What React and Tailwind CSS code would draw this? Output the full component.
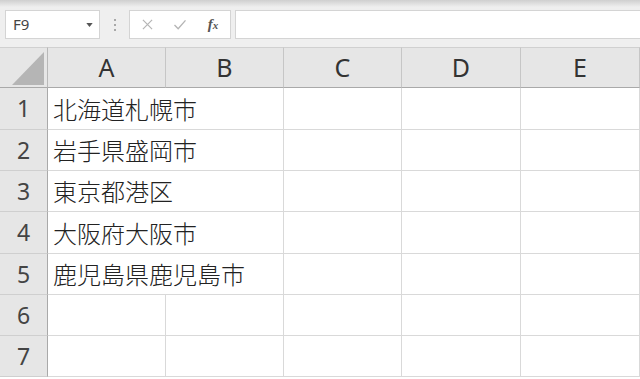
import React from "react";

const cols = ["A", "B", "C", "D", "E"];
const rowHeights = [42, 41, 41, 42, 41, 41, 41];
const data = ["北海道札幌市", "岩手県盛岡市", "東京都港区", "大阪府大阪市", "鹿児島県鹿児島市", "", ""];

const latin = { fontFamily: '"Noto Sans", "Open Sans", sans-serif' };
const cjk = { fontFamily: '"Noto Sans CJK JP", "Noto Sans", sans-serif' };

function FormulaBar() {
  return (
    <div className="h-[47px] bg-[#efefef] relative">
      <div className="absolute inset-x-0 top-0 h-[7px] bg-gradient-to-b from-[#cfcfcf] to-[#efefef]" />
      <div className="relative flex items-start pt-[10px]">
        {/* Name box */}
        <div className="ml-[5px] w-[95px] h-[29px] bg-white border border-[#d4d4d4] flex items-center justify-between pl-[7px] pr-[6px]">
          <span className="text-[15px] text-[#444] leading-none" style={latin}>F9</span>
          <svg viewBox="0 0 8 5" className="w-[7px] h-[4px] fill-[#555]">
            <path d="M0 0h8L4 5z" />
          </svg>
        </div>
        {/* dots */}
        <div className="w-[29px] h-[29px] flex flex-col items-center justify-center gap-[3px]">
          <span className="w-[2px] h-[2px] bg-[#a8a8a8]" />
          <span className="w-[2px] h-[2px] bg-[#a8a8a8]" />
          <span className="w-[2px] h-[2px] bg-[#a8a8a8]" />
        </div>
        {/* buttons */}
        <div className="w-[102px] h-[29px] bg-white border border-[#d4d4d4] flex items-center">
          <div className="w-[34px] flex justify-center">
            <svg viewBox="0 0 12 12" className="w-[11px] h-[11px] stroke-[#b5b5b5]" strokeWidth="1.3" fill="none">
              <path d="M1 1l10 10M11 1L1 11" />
            </svg>
          </div>
          <div className="w-[32px] flex justify-center">
            <svg viewBox="0 0 14 12" className="w-[14px] h-[11px] stroke-[#b5b5b5]" strokeWidth="1.5" fill="none">
              <path d="M1 6.5l4 4L13 1.5" />
            </svg>
          </div>
          <div className="w-[34px] flex justify-center">
            <span className="text-[15px] italic font-bold text-[#555] leading-none" style={{ fontFamily: '"Liberation Serif", serif' }}>
              f<span className="text-[11px]">x</span>
            </span>
          </div>
        </div>
        {/* formula input */}
        <div className="ml-[4px] flex-1 h-[29px] bg-white border border-[#d4d4d4] border-r-0" />
      </div>
    </div>
  );
}

export default function App() {
  return (
    <div className="w-[640px] h-[379px] overflow-hidden bg-white select-none">
      <FormulaBar />
      <div className="grid grid-cols-[48px_118px_118px_118px_119px_119px] bg-white">
        {/* header row */}
        <div className="h-[41px] bg-[#e6e6e6] border-t border-[#d0d0d0] border-b border-b-[#a9a9a9] border-r border-r-[#b8b8b8] flex items-end justify-end pr-[3px] pb-[2px]">
          <svg viewBox="0 0 32 33" className="w-[32px] h-[33px]">
            <path d="M0 33L32 0v33z" fill="#b5b5b5" />
          </svg>
        </div>
        {cols.map((c) => (
          <div
            key={c}
            className="h-[41px] bg-[#e6e6e6] border-t border-[#d0d0d0] border-b border-b-[#a9a9a9] border-r border-r-[#c6c6c6] flex items-center justify-center text-[25px] text-[#333] leading-none"
            style={latin}
          >
            {c}
          </div>
        ))}

        {/* body rows */}
        {rowHeights.map((h, i) => (
          <React.Fragment key={i}>
            <div
              className="bg-[#e6e6e6] border-r border-r-[#a9a9a9] border-b border-b-[#cfcfcf] flex items-center justify-center text-[23px] text-[#444] leading-none"
              style={{ ...latin, height: h }}
            >
              {i + 1}
            </div>
            {cols.map((c, j) => {
              const overflow = j === 0 && data[i];
              return (
                <div
                  key={c}
                  className={
                    "relative border-b border-b-[#d9d9d9] " +
                    (overflow ? "" : "border-r border-r-[#d9d9d9]")
                  }
                  style={{ height: h }}
                >
                  {j === 0 && data[i] && (
                    <span
                      className="absolute left-[5px] top-0 bottom-0 flex items-center whitespace-nowrap text-[24px] font-light text-[#222] leading-none z-10"
                      style={cjk}
                    >
                      {data[i]}
                    </span>
                  )}
                </div>
              );
            })}
          </React.Fragment>
        ))}
      </div>
    </div>
  );
}
